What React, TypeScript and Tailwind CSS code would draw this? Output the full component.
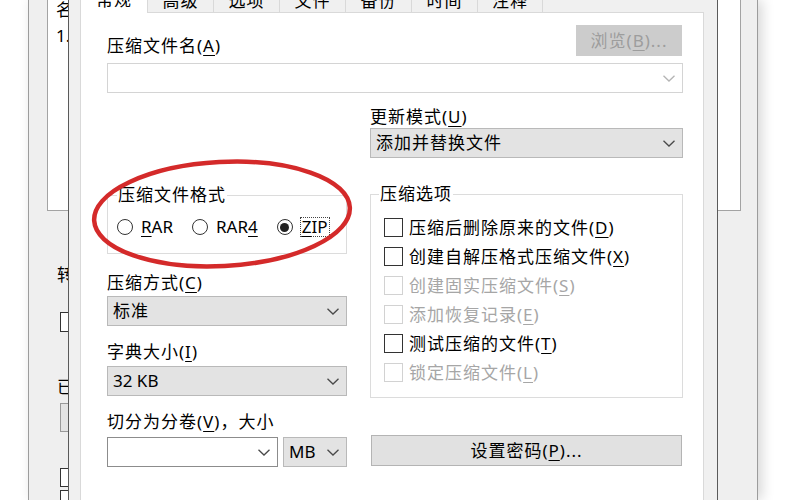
import type { ReactNode } from "react";

const font = "font-['Noto_Sans','Noto_Sans_CJK_SC',sans-serif]";

function Key({ children }: { children: ReactNode }) {
  return <span className="underline decoration-1 underline-offset-[3px]">{children}</span>;
}

function Chevron({ light }: { light?: boolean }) {
  return (
    <svg
      width="12"
      height="7"
      viewBox="0 0 12 7"
      className={light ? "text-[#b4b4b4]" : "text-[#4a4a4a]"}
    >
      <polyline points="0.5,0.8 6,6 11.5,0.8" fill="none" stroke="currentColor" strokeWidth="1.3" />
    </svg>
  );
}

function Combo({
  value,
  white,
  light,
  className = "",
}: {
  value?: string;
  white?: boolean;
  light?: boolean;
  className?: string;
}) {
  return (
    <div
      className={`flex h-[30px] items-center justify-between border pl-[5px] pr-[7px] text-[17px] leading-[20px] tracking-[1px] ${
        white
          ? light
            ? "border-[#d4d4d4] bg-white"
            : "border-[#8c8c8c] bg-white"
          : "border-[#b9b9b9] bg-[#e3e3e3]"
      } ${className}`}
    >
      <span>{value}</span>
      <Chevron light={light} />
    </div>
  );
}

function Radio({ label, checked, focus }: { label: ReactNode; checked?: boolean; focus?: boolean }) {
  return (
    <div className="flex items-center gap-[7px]">
      <span className="flex h-[16px] w-[16px] items-center justify-center rounded-full border border-[#333] bg-white">
        {checked && <span className="h-[9px] w-[9px] rounded-full bg-[#222]" />}
      </span>
      <span className={focus ? "border border-dotted border-[#444] px-[1px] leading-[18px]" : "px-[1px]"}>
        {label}
      </span>
    </div>
  );
}

function Check({ label, disabled }: { label: ReactNode; disabled?: boolean }) {
  return (
    <div className={`flex h-[29px] items-center gap-[6px] ${disabled ? "text-[#a6a6a6]" : "text-black"}`}>
      <span
        className={`h-[19px] w-[19px] border bg-white ${disabled ? "border-[#d2d2d2]" : "border-[#333]"}`}
      />
      <span>{label}</span>
    </div>
  );
}

const tabs = ["常规", "高级", "选项", "文件", "备份", "时间", "注释"];
const tabWidths = ["w-[68px]", "w-[66px]", "w-[66px]", "w-[66px]", "w-[66px]", "w-[66px]", "w-[65px]"];

function BackWindow() {
  return (
    <div
      className={`absolute left-[28px] top-0 h-[500px] w-[730px] border-x border-[#9c9c9c] bg-[#efefef] shadow-[4px_0_12px_rgba(0,0,0,0.16)] ${font} text-[17px] leading-[20px]`}
    >
      <div className="ml-[18px] mr-[16px] h-[211px] border border-t-0 border-[#a3a3a3] bg-white pl-[8px]">
        <div>名</div>
        <div className="mt-[6px]">1.</div>
      </div>
      <div className="ml-[28px] mt-[54px]">转</div>
      <div className="ml-[31px] mt-[27px] h-[20px] w-[20px] border border-[#333] bg-white" />
      <div className="ml-[28px] mt-[45px]">已</div>
      <div className="ml-[31px] mt-[6px] h-[29px] w-[60px] border border-[#999] bg-[#e3e3e3]" />
      <div className="ml-[31px] mt-[36px] h-[19px] w-[19px] border border-[#333] bg-white" />
      <div className="ml-[31px] mt-[3px] h-[19px] w-[19px] border border-[#333] bg-white" />
    </div>
  );
}

function Dialog() {
  return (
    <div
      className={`absolute left-[68px] top-[-14px] flex h-[530px] w-[650px] flex-col border-x border-[#5a5a5a] bg-[#f0f0f0] pl-[11px] pr-[13px] ${font} text-[17px] leading-[20px] tracking-[1px] text-black`}
    >
      <div className="flex h-[26px] items-end">
        {tabs.map((t, i) => (
          <div
            key={t}
            className={`flex items-center justify-center ${tabWidths[i]} ${
              i === 0
                ? "relative z-10 -mb-px h-[27px] border border-b-0 border-[#d9d9d9] bg-white"
                : "h-[24px] border-r border-t border-[#d9d9d9] bg-[#f0f0f0]"
            }`}
          >
            {t}
          </div>
        ))}
      </div>

      <div className="flex-1 border border-[#d9d9d9] bg-white pl-[26px] pr-[20px] pt-[12px]">
        <div className="flex h-[31px] items-end justify-between">
          <div>
            压缩文件名(<Key>A</Key>)
          </div>
          <div className="mr-[1px] flex h-[31px] w-[106px] items-center justify-center bg-[#cccccc] text-[#9d9d9d]">
            浏览(<Key>B</Key>)...
          </div>
        </div>
        <Combo white light className="mt-[7px]" />

        <div className="flex items-start gap-[23px]">
          <div className="flex w-[240px] flex-col">
            <fieldset className="mt-[92px] border border-[#dcdcdc] pb-[16px] pl-[9px] pt-[12px]">
              <legend className="px-[1px]">压缩文件格式</legend>
              <div className="flex h-[20px] items-center gap-[18px] tracking-normal">
                <Radio
                  label={
                    <>
                      <Key>R</Key>AR
                    </>
                  }
                />
                <Radio
                  label={
                    <>
                      RAR<Key>4</Key>
                    </>
                  }
                />
                <Radio
                  checked
                  focus
                  label={
                    <>
                      <Key>Z</Key>IP
                    </>
                  }
                />
              </div>
            </fieldset>
            <div className="mt-[19px]">
              压缩方式(<Key>C</Key>)
            </div>
            <Combo value="标准" className="mt-[3px]" />
            <div className="mt-[16px]">
              字典大小(<Key>I</Key>)
            </div>
            <Combo value="32 KB" className="mt-[4px] tracking-normal" />
            <div className="mt-[16px]">
              切分为分卷(<Key>V</Key>)，大小
            </div>
            <div className="mt-[5px] flex gap-[5px]">
              <Combo white className="w-[171px]" />
              <Combo value="MB" className="w-[64px] tracking-normal" />
            </div>
          </div>

          <div className="flex w-[313px] flex-col">
            <div className="mt-[14px]">
              更新模式(<Key>U</Key>)
            </div>
            <Combo value="添加并替换文件" className="mt-[1px]" />
            <fieldset className="mt-[26px] border border-[#dcdcdc] pb-[10px] pl-[8px] pt-[9px]">
              <legend className="px-[1px]">压缩选项</legend>
              <div className="pl-[5px]">
                <Check
                  label={
                    <>
                      压缩后删除原来的文件(<Key>D</Key>)
                    </>
                  }
                />
                <Check
                  label={
                    <>
                      创建自解压格式压缩文件(<Key>X</Key>)
                    </>
                  }
                />
                <Check
                  disabled
                  label={
                    <>
                      创建固实压缩文件(<Key>S</Key>)
                    </>
                  }
                />
                <Check
                  disabled
                  label={
                    <>
                      添加恢复记录(<Key>E</Key>)
                    </>
                  }
                />
                <Check
                  label={
                    <>
                      测试压缩的文件(<Key>T</Key>)
                    </>
                  }
                />
                <Check
                  disabled
                  label={
                    <>
                      锁定压缩文件(<Key>L</Key>)
                    </>
                  }
                />
              </div>
            </fieldset>
            <div className="mx-[1px] mt-[37px] flex h-[31px] items-center justify-center border border-[#b4b4b4] bg-[#e1e1e1]">
              设置密码(<Key>P</Key>)...
            </div>
          </div>
        </div>
      </div>
    </div>
  );
}

export default function App() {
  return (
    <div className="relative h-[500px] w-[800px] overflow-hidden bg-white">
      <BackWindow />
      <Dialog />
      <svg className="pointer-events-none absolute inset-0" width="800" height="500">
        <ellipse
          cx="222"
          cy="214"
          rx="128"
          ry="52"
          transform="rotate(-3 222 214)"
          fill="none"
          stroke="#d42a2a"
          strokeWidth="4.5"
        />
      </svg>
    </div>
  );
}
